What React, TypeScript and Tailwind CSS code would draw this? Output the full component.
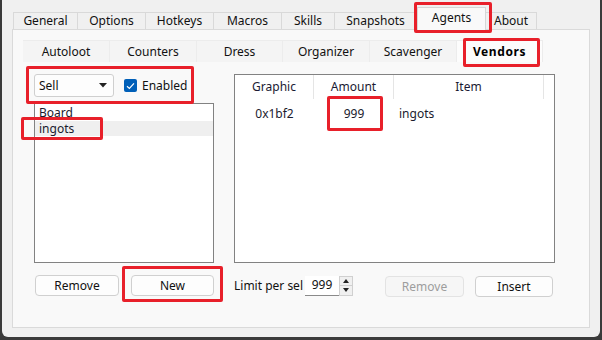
import React from "react";

const FONT = { fontFamily: '"Noto Sans", "Open Sans", sans-serif' };

const topTabs: { label: string; w: string; sel?: boolean }[] = [
  { label: "General", w: "w-[65px]" },
  { label: "Options", w: "w-[68px]" },
  { label: "Hotkeys", w: "w-[68px]" },
  { label: "Macros", w: "w-[68px]" },
  { label: "Skills", w: "w-[53px]" },
  { label: "Snapshots", w: "w-[82px]" },
  { label: "Agents", w: "w-[69px]", sel: true },
  { label: "About", w: "w-[51px]" },
];

const innerTabs: { label: string; w: string; sel?: boolean }[] = [
  { label: "Autoloot", w: "w-[87px]" },
  { label: "Counters", w: "w-[87px]" },
  { label: "Dress", w: "w-[86px]" },
  { label: "Organizer", w: "w-[87px]" },
  { label: "Scavenger", w: "w-[87px]" },
  { label: "Vendors", w: "w-[86px]", sel: true },
];

function Btn({ children, w, disabled }: { children: React.ReactNode; w: string; disabled?: boolean }) {
  return (
    <div
      className={`${w} h-[21px] rounded-[4px] border flex items-center justify-center text-[12px] leading-none ${
        disabled
          ? "border-[#e3e3e3] bg-[#f6f6f6] text-[#9d9d9d]"
          : "border-[#d0d0d0] bg-[#fdfdfd] text-[#111]"
      }`}
    >
      {children}
    </div>
  );
}

export default function App() {
  return (
    <div className="w-[602px] h-[340px] bg-[#3a3a3a] pl-[2px] pr-[2px] pb-[3px] overflow-hidden" style={FONT}>
      <div className="relative h-full bg-[#f0f0f0] rounded-b-[6px] pt-[8px] pl-[10px]">
        {/* top tabs */}
        <div className="flex items-end h-[21px] ml-[1px]">
          {topTabs.map((t) =>
            t.sel ? (
              <div
                key={t.label}
                className={`${t.w} h-[23px] -mb-[1px] relative z-10 bg-[#f9f9f9] border border-b-0 border-[#d6d6d6] flex items-center justify-center text-[12px] text-[#111] pb-[2px]`}
              >
                {t.label}
              </div>
            ) : (
              <div
                key={t.label}
                className={`${t.w} h-[17px] bg-[#f0f0f0] border border-b-0 border-l-0 first:border-l border-[#d9d9d9] flex items-center justify-center text-[12px] text-[#111]`}
              >
                {t.label}
              </div>
            )
          )}
        </div>
        {/* outer panel */}
        <div className="w-[578px] h-[299px] bg-[#f9f9f9] border border-[#dadada] pt-[10px] pl-[10px]">
          {/* inner tabs */}
          <div className="flex h-[22px]">
            {innerTabs.map((t) => (
              <div
                key={t.label}
                className={`${t.w} h-[22px] flex items-center justify-center text-[12px] border-t border-r border-[#ececec] ${
                  t.sel ? "bg-[#fcfcfc] font-bold text-[#000] tracking-[0.6px]" : "bg-[#f4f4f4] text-[#111]"
                }`}
              >
                {t.label}
              </div>
            ))}
          </div>
          {/* page */}
          <div className="flex gap-[20px] ml-[11px] mt-[12px]">
            {/* left column */}
            <div className="w-[180px] flex flex-col">
              <div className="flex items-center h-[23px]">
                <div className="w-[80px] h-[23px] rounded-[3px] border border-[#cfcfcf] bg-[#fdfdfd] flex items-center justify-between pl-[4px] pr-[6px] text-[12px] text-[#111]">
                  <span>Sell</span>
                  <svg width="8" height="5" viewBox="0 0 8 5">
                    <path d="M0 0 L8 0 L4 4.5 Z" fill="#222" />
                  </svg>
                </div>
                <div className="ml-[10px] w-[13px] h-[13px] rounded-[2px] bg-[#005fb8] flex items-center justify-center">
                  <svg width="9" height="8" viewBox="0 0 9 8">
                    <path d="M1 4.2 L3.4 6.4 L8 1.4" stroke="#fff" strokeWidth="1.2" fill="none" />
                  </svg>
                </div>
                <span className="ml-[5px] text-[12px] text-[#111]">Enabled</span>
              </div>
              <div className="mt-[6px] h-[160px] border border-[#828282] bg-white flex flex-col text-[12px] text-[#1a1a2e]">
                <div className="h-[17px] leading-[15px] pt-[1px] pl-[4px]">Board</div>
                <div className="h-[15px] leading-[15px] pl-[4px] bg-[#efefef]">ingots</div>
              </div>
              <div className="mt-[12px] flex gap-[12px] pl-[1px]">
                <Btn w="w-[84px]">Remove</Btn>
                <Btn w="w-[83px]">New</Btn>
              </div>
            </div>
            {/* right column */}
            <div className="w-[321px] flex flex-col">
              <div className="h-[189px] border border-[#828282] bg-white text-[12px]">
                <div className="flex h-[24px] items-stretch text-[#1a1a33]">
                  <div className="w-[79px] border-r border-[#e5e5e5] flex items-center justify-center">Graphic</div>
                  <div className="w-[80px] border-r border-[#e5e5e5] flex items-center justify-center">Amount</div>
                  <div className="w-[150px] border-r border-[#e5e5e5] flex items-center justify-center">Item</div>
                </div>
                <div className="flex h-[16px] mt-[7px] items-center text-[#1a1a2e]">
                  <div className="w-[79px] text-center">0x1bf2</div>
                  <div className="w-[80px] text-center">999</div>
                  <div className="pl-[5px]">ingots</div>
                </div>
              </div>
              <div className="mt-[11px] flex items-center h-[23px]">
                <span className="text-[12px] text-[#111] w-[71px]">Limit per sel</span>
                <div className="flex h-[20px] items-stretch">
                  <div className="w-[34px] bg-white border-b border-[#8a8a8a] flex items-center justify-center text-[12px] text-[#111]">
                    999
                  </div>
                  <div className="w-[14px] flex flex-col border border-[#d0d0d0] bg-[#f0f0f0]">
                    <div className="flex-1 flex items-center justify-center border-b border-[#d0d0d0]">
                      <svg width="6" height="4" viewBox="0 0 6 4"><path d="M0 4 L6 4 L3 0 Z" fill="#222" /></svg>
                    </div>
                    <div className="flex-1 flex items-center justify-center">
                      <svg width="6" height="4" viewBox="0 0 6 4"><path d="M0 0 L6 0 L3 4 Z" fill="#222" /></svg>
                    </div>
                  </div>
                </div>
                <div className="ml-[32px] flex gap-[11px] self-end">
                  <Btn w="w-[79px]" disabled>Remove</Btn>
                  <Btn w="w-[78px]">Insert</Btn>
                </div>
              </div>
            </div>
          </div>
        </div>

        {/* red annotation boxes (absolute overlays, coords relative to window at x=2) */}
        <div className="absolute left-[412px] top-[2px] w-[78px] h-[31px] border-[3px] border-[#e8202a] rounded-[2px]" />
        <div className="absolute left-[461px] top-[38px] w-[77px] h-[29px] border-[3px] border-[#e8202a] rounded-[2px]" />
        <div className="absolute left-[24px] top-[66px] w-[168px] h-[38px] border-[3px] border-[#e8202a] rounded-[2px]" />
        <div className="absolute left-[19px] top-[117px] w-[82px] h-[23px] border-[3px] border-[#e8202a] rounded-[2px]" />
        <div className="absolute left-[325px] top-[96px] w-[56px] h-[35px] border-[3px] border-[#e8202a] rounded-[2px]" />
        <div className="absolute left-[120px] top-[266px] w-[101px] h-[36px] border-[3px] border-[#e8202a] rounded-[2px]" />
      </div>
    </div>
  );
}
